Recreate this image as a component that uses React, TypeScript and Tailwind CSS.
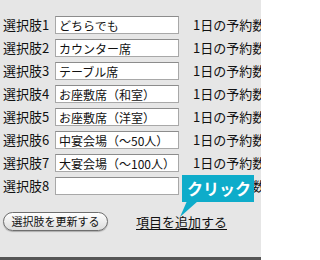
const OPTIONS = [
  "どちらでも",
  "カウンター席",
  "テーブル席",
  "お座敷席（和室）",
  "お座敷席（洋室）",
  "中宴会場（〜50人）",
  "大宴会場（〜100人）",
  "",
];

const font = { fontFamily: '"Noto Sans CJK JP", "Noto Sans", sans-serif' };

export default function App() {
  return (
    <div
      className="relative w-[261px] h-[260px] overflow-hidden bg-[#e6e6e6] border-b-[3px] border-[#555] text-[#111]"
      style={font}
    >
      <div className="flex flex-col gap-[5px] pt-[16px]">
        {OPTIONS.map((opt, i) => (
          <div key={i} className="flex items-center h-[18px] whitespace-nowrap">
            <div className="w-[55px] shrink-0 pl-[3px] text-[13px] leading-[18px]">選択肢{i + 1}</div>
            <input
              readOnly
              value={opt}
              className="w-[124px] h-[18px] shrink-0 bg-white border border-[#a8a8a8] border-t-[#8c8c8c] px-[3px] text-[12px] leading-[16px] outline-none"
              style={font}
            />
            <div className="ml-[14px] text-[13px] leading-[18px]">1日の予約数</div>
          </div>
        ))}
      </div>

      <div className="flex items-center mt-[17px] h-[19px]">
        <button
          type="button"
          className="ml-[3px] w-[105px] h-[19px] shrink-0 rounded-full border border-[#6e6e6e] bg-gradient-to-b from-white to-[#dcdcdc] text-[11px] leading-[17px] text-[#111] shadow-[0_1px_1px_rgba(0,0,0,0.25)]"
          style={font}
        >
          選択肢を更新する
        </button>
        <a className="ml-[28px] text-[13px] leading-[18px] underline underline-offset-2 text-[#111] whitespace-nowrap">
          項目を追加する
        </a>
      </div>

      {/* callout */}
      <div className="absolute left-[182px] top-[175px] w-[72px] h-[27px] bg-[#0eacca] text-white font-bold text-[16px] leading-[27px] pl-[5px] whitespace-nowrap">
        クリック
      </div>
      <svg className="absolute left-[178px] top-[201px]" width="22" height="17" viewBox="0 0 22 17">
        <polygon points="9,0 20,0 2,16" fill="#0eacca" />
      </svg>
    </div>
  );
}
